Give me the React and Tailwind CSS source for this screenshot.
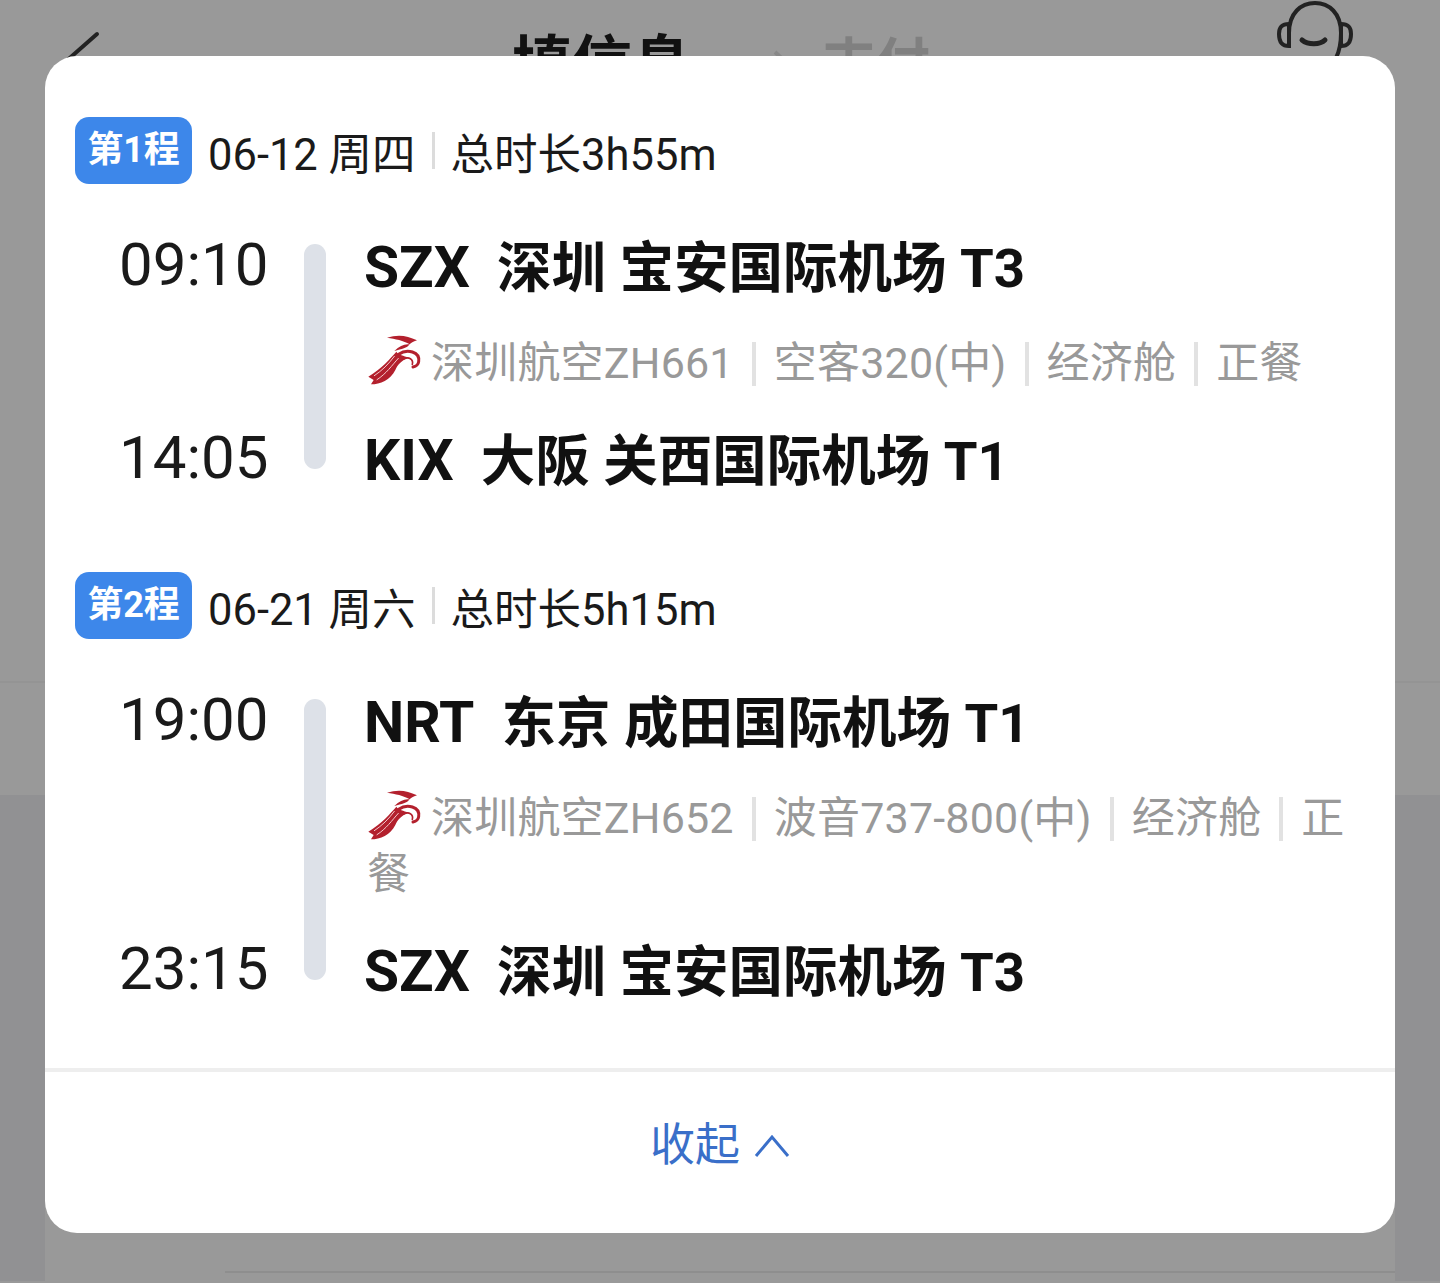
import React from 'react';

const legs = [
    {
        badge: '第1程', date: '06-12 周四', total: '总时长3h55m',
        depart: { time: '09:10', code: 'SZX', name: '深圳 宝安国际机场 T3' },
        arrive: { time: '14:05', code: 'KIX', name: '大阪 关西国际机场 T1' },
        info: ['深圳航空ZH661', '空客320(中)', '经济舱'],
        meal: ['正', '餐'],
    },
    {
        badge: '第2程', date: '06-21 周六', total: '总时长5h15m',
        depart: { time: '19:00', code: 'NRT', name: '东京 成田国际机场 T1' },
        arrive: { time: '23:15', code: 'SZX', name: '深圳 宝安国际机场 T3' },
        info: ['深圳航空ZH652', '波音737-800(中)', '经济舱'],
        meal: ['正', '餐'],
    },
];

const font = "font-['Roboto','Noto_Sans_CJK_SC',sans-serif]";

const Logo = () => (
    <svg viewBox="40 30 165 165" className="inline-block w-[55px] h-[55px] align-[-12px] mr-[9px]" fill="none" strokeLinecap="round">
        <path d="M100 38 C130 28 160 30 190 46 C178 50 172 54 168 58 C150 46 125 42 100 38 Z" fill="#b3202d" />
        <path d="M168 58 C160 70 145 72 122 78 C138 62 152 56 168 58 Z" fill="#b3202d" />
        <path d="M128 80 C110 100 85 130 44 155 L60 165 L52 178 C80 178 110 165 125 135 C132 118 145 105 165 98 C150 92 135 90 128 80 Z" fill="#b3202d" />
        <path d="M122 94 C104 118 86 136 62 152" stroke="#f4c9cc" strokeWidth="3" />
        <path d="M134 100 C114 122 98 146 70 164" stroke="#f4c9cc" strokeWidth="3" />
        <path d="M135 88 C160 70 200 80 195 110 C194 118 188 124 178 126" stroke="#b3202d" strokeWidth="9" />
        <path d="M150 102 C165 94 180 102 176 118" stroke="#b3202d" strokeWidth="5" />
    </svg>
);

const Airport = ({ code, name }) => (
    <div className="text-[54.5px] leading-[56px] font-bold text-[#111] whitespace-pre">
        <span className="text-[57px]">{code}</span>{'  '}{name}
    </div>
);

const Sep = () => <span className="inline-block w-[4px] h-[44px] bg-[#e2e2e2] mx-[18px] align-[-8px]"></span>;

const Leg = ({ leg }) => (
    <div>
        <div className="flex items-center">
            <div className="w-[117px] h-[67px] rounded-[14px] bg-[#3d87ea] text-white text-[36px] font-bold flex items-center justify-center pb-[2px]">{leg.badge}</div>
            <div className="ml-[16px] mt-[10px] text-[43.5px] leading-[56px] text-[#1a1a1a] whitespace-pre flex items-center">
                <span>{leg.date}</span>
                <span className="w-[3px] h-[37px] bg-[#dcdcdc] ml-[16px] mr-[16px] -mt-[10px]"></span>
                <span>{leg.total}</span>
            </div>
        </div>
        <div className="flex mt-[56px] pl-[44px]">
            <div className="w-[151px] -mt-[5px] mb-[1px] flex flex-col justify-between text-[60px] leading-[60px] text-[#1a1a1a]">
                <div>{leg.depart.time}</div>
                <div>{leg.arrive.time}</div>
            </div>
            <div className="w-[22px] ml-[34px] mt-[4px] mb-[20px] rounded-full bg-[#dde1e8]"></div>
            <div className="ml-[38px] w-[1000px]">
                <Airport {...leg.depart} />
                <div className="mt-[39px] mb-[42px] pl-[3px] text-[43px] tracking-[0.2px] leading-[56px] text-[#999]">
                    <Logo />
                    {leg.info.map((item, idx) => (
                        <React.Fragment key={idx}>
                            {idx > 0 && <Sep />}
                            <span>{item}</span>
                        </React.Fragment>
                    ))}
                    <Sep />
                    {leg.meal.map((ch, idx) => <span key={idx}>{ch}</span>)}
                </div>
                <Airport {...leg.arrive} />
            </div>
        </div>
    </div>
);

const App = () => {
    return (
        <div className={`relative w-[1440px] h-[1283px] overflow-hidden bg-[#999] ${font}`}>
            {/* --- PAGE BEHIND THE SHEET --- */}
            <div className="relative h-[100px]">
                <svg className="absolute left-[40px] top-[25px]" width="70" height="60" viewBox="0 0 70 60" fill="none">
                    <path d="M57 9 L15 46" stroke="#222" strokeWidth="4" strokeLinecap="round" />
                </svg>
                <div className="absolute left-[512px] top-[29px] text-[60px] leading-[72px] font-bold text-[#111] whitespace-pre">填信息</div>
                <svg className="absolute left-[770px] top-[46px]" width="30" height="30" viewBox="0 0 30 30" fill="none">
                    <path d="M5 6 L24 24" stroke="#888" strokeWidth="4" />
                </svg>
                <div className="absolute left-[822px] top-[29px] text-[54px] leading-[72px] font-bold text-[#808080]">支付</div>
                <svg className="absolute left-[1270px] top-0" width="90" height="60" viewBox="0 0 90 60" fill="none" stroke="#222" strokeWidth="4" strokeLinecap="round">
                    <path d="M19 33 C19 13 31 3 45 3 C59 3 71 13 71 33 C71 42 70 50 66 58" />
                    <path d="M19 24 C11 24 9 28 9 34 C9 41 11 46 19 46 Z" />
                    <path d="M71 24 C79 24 81 28 81 34 C81 41 79 46 71 46 Z" />
                    <path d="M32 40 C38 45 50 45 55 40" strokeWidth="5" />
                </svg>
            </div>
            <div className="h-[583px] border-b-[2px] border-[#949494]"></div>
            <div className="h-[112px]"></div>
            <div className="h-[486px] bg-[#919193] px-[45px]">
                <div className="h-full bg-[#999] pl-[180px] pt-[476px]">
                    <div className="h-[2px] bg-[#8e8e8e]"></div>
                </div>
            </div>

            {/* --- SHEET --- */}
            <div className="absolute left-[45px] top-[56px] w-[1350px] h-[1177px] rounded-[32px] bg-white flex flex-col">
                <div className="pt-[61px] pl-[30px] flex flex-col gap-[83px]">
                    {legs.map((leg, idx) => <Leg key={idx} leg={leg} />)}
                </div>
                <div className="mt-[68px] h-[4px] bg-[#eeeeee]"></div>
                <div className="flex-1 flex items-center justify-center pb-[14px] text-[45px] text-[#3a6fc9]">
                    <span>收起</span>
                    <svg className="ml-[14px]" width="36" height="26" viewBox="0 0 36 26" fill="none" stroke="#3a6fc9" strokeWidth="3">
                        <path d="M2 23 L18 4 L34 23" />
                    </svg>
                </div>
            </div>
        </div>
    );
};

export default App;
